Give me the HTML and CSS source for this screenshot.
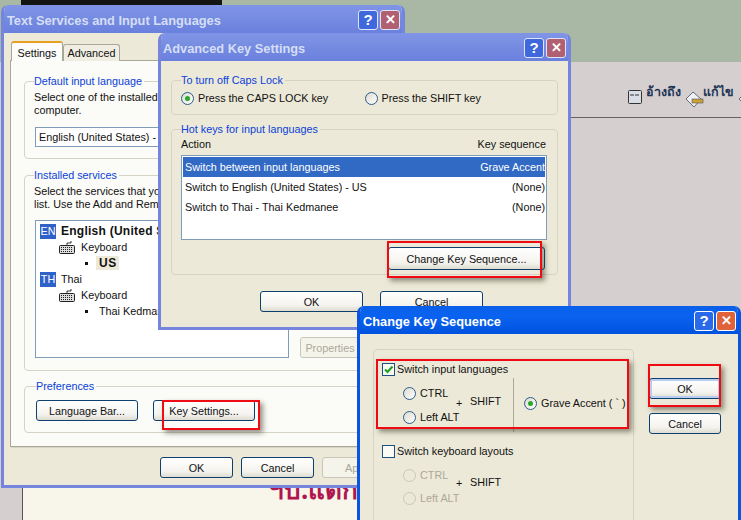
FILE: index.html
```html
<!DOCTYPE html>
<html lang="en">
<head>
<meta charset="utf-8">
<title>Text Services and Input Languages</title>
<link rel="stylesheet" href="styles.css">
</head>
<body>
<div class="desk">
  <div class="green"></div>
  <div class="art-top"></div>
  <div class="rule"></div>
  <div class="forum-actions">
    <svg class="ic-quote" width="14" height="14" viewBox="0 0 14 14"><rect x=".5" y=".5" width="13" height="13" rx="1" fill="#d9dde6" stroke="#333"/><path d="M3 4v2M5 4v2M8 4v2M10 4v2" stroke="#333"/></svg>
    <span class="act">อ้างถึง</span>
    <svg class="ic-edit" width="19" height="19" viewBox="0 0 19 19"><path d="M1 9 8 2l8 7-7 8z" fill="#eef2f6" stroke="#667"/><rect x="7" y="9" width="11" height="4" fill="#c9a23a" stroke="#555" stroke-width=".6"/></svg>
    <span class="act">แก้ไข</span>
    <svg class="ic-edit ic-next" width="19" height="19" viewBox="0 0 19 19"><path d="M1 9 8 2l8 7-7 8z" fill="#eef2f6" stroke="#667"/></svg>
  </div>
  <div class="paper"><span class="paper-text">ฯบ.แดก</span></div>

  <section class="win win-a inactive">
    <header class="title"><h1>Text Services and Input Languages</h1><span class="tb tb-help">?</span><span class="tb tb-close">✕</span></header>
    <div class="body">
      <div class="tabs"><span class="tab tab-on">Settings</span><span class="tab">Advanced</span></div>
      <div class="panel">
        <fieldset class="grp g-default">
          <legend>Default input language</legend>
          <p>Select one of the installed input languages to use when you start your<br>computer.</p>
          <div class="combo">English (United States) - US</div>
        </fieldset>
        <fieldset class="grp g-services">
          <legend>Installed services</legend>
          <p>Select the services that you want for each input language shown in the<br>list. Use the Add and Remove buttons to modify this list.</p>
          <div class="svc-wrap">
            <div class="tree">
              <div class="node"><span class="lang">EN</span><b class="lang-name">English (United States)</b></div>
              <div class="node n1"><svg class="kbd" width="16" height="13" viewBox="0 0 16 13"><path d="M8 4V2h4V0" fill="none" stroke="#333"/><rect x=".5" y="4.500" width="15" height="8" rx="1" fill="#ddd" stroke="#222"/><path d="M2 6.500h12M2 8.500h12M2 10.500h12" stroke="#222" stroke-dasharray="1 1"/></svg>Keyboard</div>
              <div class="node n2"><i class="sq"></i><b class="sel">US</b></div>
              <div class="node"><span class="lang">TH</span><span class="lang-name">Thai</span></div>
              <div class="node n1"><svg class="kbd" width="16" height="13" viewBox="0 0 16 13"><path d="M8 4V2h4V0" fill="none" stroke="#333"/><rect x=".5" y="4.500" width="15" height="8" rx="1" fill="#ddd" stroke="#222"/><path d="M2 6.500h12M2 8.500h12M2 10.500h12" stroke="#222" stroke-dasharray="1 1"/></svg>Keyboard</div>
              <div class="node n2"><i class="sq"></i><span class="plain">Thai Kedmanee</span></div>
            </div>
            <button class="btn off b-props">Properties</button>
          </div>
        </fieldset>
        <fieldset class="grp g-prefs">
          <legend>Preferences</legend>
          <div class="pref-row"><button class="btn b-pref">Language Bar...</button><button class="btn b-pref">Key Settings...</button></div>
        </fieldset>
      </div>
      <div class="foot"><button class="btn b-foot">OK</button><button class="btn b-foot">Cancel</button><button class="btn b-foot off">Apply</button></div>
    </div>
  </section>
  <div class="mark m-key"></div>

  <section class="win win-b inactive">
    <header class="title"><h1>Advanced Key Settings</h1><span class="tb tb-help">?</span><span class="tb tb-close">✕</span></header>
    <div class="body">
      <fieldset class="grp g-caps">
        <legend>To turn off Caps Lock</legend>
        <div class="caps-row">
          <label class="opt"><i class="radio on"></i>Press the CAPS LOCK key</label>
          <label class="opt"><i class="radio"></i>Press the SHIFT key</label>
        </div>
      </fieldset>
      <fieldset class="grp g-hot">
        <legend>Hot keys for input languages</legend>
        <div class="cols"><span>Action</span><span>Key sequence</span></div>
        <div class="keys">
          <div class="key-row active"><span>Switch between input languages</span><span>Grave Accent</span></div>
          <div class="key-row"><span>Switch to English (United States) - US</span><span>(None)</span></div>
          <div class="key-row"><span>Switch to Thai - Thai Kedmanee</span><span>(None)</span></div>
        </div>
        <div class="change-row"><button class="btn b-change">Change Key Sequence...</button></div>
      </fieldset>
      <div class="foot-b"><button class="btn b-wide">OK</button><button class="btn b-wide">Cancel</button></div>
    </div>
  </section>
  <div class="mark m-change"></div>

  <section class="win win-c">
    <header class="title"><h1>Change Key Sequence</h1><span class="tb tb-help">?</span><span class="tb tb-close">✕</span></header>
    <div class="body body-c">
      <fieldset class="grp g-seq">
        <label class="check-line"><i class="check"><svg width="11" height="11" viewBox="0 0 11 11"><path d="M2 5.500 4.500 8 9.500 2.500" fill="none" stroke="#21a121" stroke-width="2.200"/></svg></i>Switch input languages</label>
        <div class="combo-set">
          <div class="mods">
            <label class="opt"><i class="radio"></i>CTRL</label>
            <label class="opt"><i class="radio"></i>Left ALT</label>
          </div>
          <span class="plus">+</span><span class="shift">SHIFT</span>
          <label class="opt grave"><i class="radio on"></i>Grave Accent ( ` )</label>
        </div>
        <label class="check-line second"><i class="check"></i>Switch keyboard layouts</label>
        <div class="combo-set dim">
          <div class="mods">
            <label class="opt off-txt"><i class="radio off-radio"></i>CTRL</label>
            <label class="opt off-txt"><i class="radio off-radio"></i>Left ALT</label>
          </div>
          <span class="plus">+</span><span class="shift">SHIFT</span>
        </div>
      </fieldset>
      <div class="side"><button class="btn b-side default">OK</button><button class="btn b-side">Cancel</button></div>
    </div>
  </section>
  <div class="mark m-seq"></div>
  <div class="mark m-ok"></div>
</div>
</body>
</html>
```

FILE: styles.css
```css
* { box-sizing: border-box; }
html, body { margin: 0; padding: 0; }
body { width: 741px; height: 520px; overflow: hidden; font-family: "Liberation Sans", Arial, sans-serif; font-size: 10.8px; color: #111; }
.desk { position: relative; width: 741px; height: 520px; overflow: hidden; background: #d6cfcf; }
.green { position: absolute; left: 0; top: 0; width: 741px; height: 62px; background: #a8b8a5; }
.art-top { position: absolute; left: 21px; top: 0; width: 201px; height: 6px; background: #141414; }
.rule { position: absolute; left: 560px; top: 117px; width: 181px; height: 1px; background: #66625f; }
.forum-actions { position: absolute; left: 628px; top: 82px; display: flex; align-items: flex-start; white-space: nowrap; }
.act { margin-top: 1px; font-family: "Noto Sans", "DejaVu Sans", sans-serif; font-weight: 700; font-size: 12.5px; line-height: 18px; color: #1d3557; }
.ic-quote { margin: 8px 4px 0 0; }
.ic-edit { margin: 8px -1px 0 4px; }
.ic-next { margin-left: 4px; }
.paper { position: absolute; left: 22px; top: 480px; width: 400px; height: 40px; background: #f8f5ea; border-left: 1px solid #555; overflow: hidden; }
.paper-text { position: absolute; left: 246px; top: -9px; font-family: "Noto Sans", "DejaVu Sans", sans-serif; font-size: 26px; line-height: 36px; font-weight: 700; color: #b0164e; white-space: nowrap; }

.win { position: absolute; display: flex; flex-direction: column; overflow: hidden; border: 3px solid #7585de; border-top: 0; border-radius: 7px 7px 0 0; background: #ece9d8; }
.win-a { left: 1px; top: 5px; width: 404px; height: 483px; z-index: 2; }
.win-b { left: 158px; top: 33px; width: 413px; height: 297px; z-index: 4; }
.win-c { left: 357px; top: 306px; width: 384px; height: 220px; border-color: #0a55e0; z-index: 6; }
.title { flex: none; height: 28px; display: flex; align-items: center; gap: 2px; margin: 0 -3px; padding: 1px 5px 0 5px; background: linear-gradient(#8094e6 0, #7a90e2 30%, #6a80de 100%); }
.win-a .title, .win-c .title { padding-left: 6px; }
.title h1 { flex: 1; margin: 0; padding-top: 2px; font-size: 12.8px; font-weight: 700; color: #d5def5; white-space: nowrap; }
.win-c .title { background: linear-gradient(#0a5fe8 0, #0a63f0 35%, #0052de 100%); }
.win-c .title h1 { color: #fff; }
.tb { width: 20px; height: 20px; flex: none; display: flex; align-items: center; justify-content: center; border: 1px solid #dfe5f8; border-radius: 3px; color: #fff; font-weight: 700; font-size: 15px; line-height: 1; }
.tb-help { background: #3f68dc; }
.tb-close { background: #b06070; font-size: 13px; }
.win-c .tb-help { background: #2a69ea; border-color: #fff; }
.win-c .tb-close { background: #e0623a; border-color: #fff; }

.body { flex: 1; min-height: 0; padding: 8px 6px 0; }
.tabs { display: flex; align-items: flex-end; height: 20px; margin-left: 1px; }
.tab { height: 17px; width: 57px; padding-top: 1px; text-align: center; line-height: 15px; background: #f0eee2; border: 1px solid #a8a899; border-bottom: 0; border-radius: 3px 3px 0 0; }
.tab-on { width: 52px; height: 20px; line-height: 18px; background: #fcfcfa; border-top: 2px solid #e8a020; }
.panel { width: 386px; height: 387px; margin-top: -1px; padding: 13px 14px 0 13px; background: #fbfbf7; border: 1px solid #a8a899; box-shadow: 1px 1px 0 #d8d5c5; }
.grp { position: relative; margin: 0; padding: 0 9px; min-width: 0; border: 1px solid #d6d3c4; border-radius: 4px; }
.grp legend { padding: 0 2px 0 0; margin: 0; line-height: 14px; color: #0a3fd8; white-space: nowrap; }
.grp p { margin: 0; line-height: 13px; white-space: nowrap; }
.g-default { height: 85px; margin-bottom: 9px; }
.g-default p { margin-top: 3px; }
.combo { width: 340px; height: 20px; margin: 10px 0 0 1px; padding-left: 3px; line-height: 19px; background: #fff; border: 1px solid #7f9db9; white-space: nowrap; overflow: hidden; }
.g-services { height: 203px; margin-bottom: 8px; }
.g-services p { margin-top: 3px; }
.svc-wrap { display: flex; align-items: flex-end; gap: 11px; margin: 9px 0 0 1px; }
.tree { width: 254px; height: 138px; padding: 2px 0 0 4px; background: #fff; border: 1px solid #7f9db9; flex: none; }
.node { display: flex; align-items: center; height: 16px; white-space: nowrap; overflow: hidden; }
.lang { width: 16px; height: 15px; margin-right: 5px; text-align: center; line-height: 15px; color: #fff; background: #2f62c8; }
b.lang-name { font-size: 12px; letter-spacing: .25px; }
.n1 { padding-left: 19px; }
.kbd { margin-right: 6px; }
.n2 { padding-left: 45px; }
.sq { width: 3px; height: 3px; margin-right: 11px; background: #111; flex: none; }
.sel { padding: 0 2px 0 3px; margin-left: -3px; background: #ece9d8; letter-spacing: .5px; font-size: 12px; }
.btn { display: block; padding: 0; font-family: inherit; font-size: 10.8px; color: #111; text-align: center; background: linear-gradient(#fff, #f4f3ee 70%, #dedcd0); border: 1px solid #0f3f6e; border-radius: 3px; white-space: nowrap; }
.btn.off { color: #aaa89a; border-color: #c9c7ba; background: #f5f4ea; }
.b-props { width: 60px; height: 21px; flex: none; }
.g-prefs { height: 54px; padding-left: 11px; }
.pref-row { display: flex; gap: 15px; padding-top: 7px; }
.b-pref { width: 102px; height: 21px; }
.foot { display: flex; justify-content: flex-end; gap: 8px; padding-top: 10px; width: 385px; }
.b-foot { width: 73px; height: 21px; }
.win-b .body { padding: 12px 10px 0; }
.g-caps { height: 42px; margin-bottom: 7px; }
.caps-row { display: flex; padding-top: 4px; }
.caps-row .opt { width: 195px; }
.opt { display: flex; align-items: center; height: 14px; white-space: nowrap; }
.radio { flex: none; display: flex; align-items: center; justify-content: center; width: 13px; height: 13px; margin-right: 4px; border: 1px solid #2c5c8e; border-radius: 50%; background: linear-gradient(135deg, #dcdbd0, #fff); }
.radio.on::after { content: ""; width: 5px; height: 5px; border-radius: 50%; background: #2ba82b; }
.radio.off-radio { border-color: #c9c7ba; background: #ece9d8; }
.g-hot { height: 153px; }
.cols { display: flex; justify-content: space-between; padding: 1px 2px 0 0; line-height: 14px; }
.keys { height: 85px; margin: 4px 1px 0 0; padding: 1px; background: #fff; border: 1px solid #7f9db9; }
.key-row { display: flex; justify-content: space-between; height: 20px; padding: 0 0 0 2px; line-height: 20px; white-space: nowrap; }
.key-row.active { color: #fff; background: #316ac5; }
.change-row { display: flex; justify-content: flex-end; margin: 7px 3px 0 0; }
.b-change { width: 157px; height: 23px; }
.foot-b { display: flex; gap: 17px; padding: 16px 0 0 89px; }
.b-wide { width: 103px; height: 21px; }
.win-c .body-c { display: flex; align-items: flex-start; padding: 15px 0 0 13px; }
.g-seq { width: 261px; height: 200px; padding: 12px 0 0 8px; flex: none; }
.check-line { display: flex; align-items: center; height: 14px; white-space: nowrap; }
.check { display: flex; align-items: center; justify-content: center; width: 13px; height: 13px; margin-right: 2px; background: #fbfbf6; border: 1px solid #1c5180; }
.combo-set { display: flex; align-items: center; height: 54px; margin-top: 2px; padding-left: 21px; }
.mods { display: flex; flex-direction: column; gap: 10px; width: 53px; }
.plus { width: 14px; padding-bottom: 4px; }
.shift { width: 43px; padding-bottom: 8px; }
.grave { height: 54px; padding: 0 0 4px 10px; border-left: 1px solid #aca899; }
.second { margin-top: 12px; }
.dim { height: 37px; margin-top: 10px; }
.dim .mods { gap: 9px; }
.dim .plus { padding-bottom: 8px; }
.dim .shift { padding-bottom: 10px; }
.off-txt { color: #aca899; }
.side { display: flex; flex-direction: column; gap: 14px; margin: 29px 0 0 15px; }
.b-side { width: 72px; height: 21px; }
.default { box-shadow: inset 0 0 0 2px #b8cdf0; }
.mark { position: absolute; border: 2px solid #f00a14; box-shadow: 3px 3px 5px rgba(60, 60, 40, .55); }
.m-key { left: 162px; top: 400px; width: 98px; height: 30px; z-index: 3; }
.m-change { left: 387px; top: 241px; width: 155px; height: 37px; z-index: 5; }
.m-seq { left: 376px; top: 359px; width: 253px; height: 70px; z-index: 7; }
.m-ok { left: 648px; top: 364px; width: 73px; height: 43px; z-index: 7; }
```
